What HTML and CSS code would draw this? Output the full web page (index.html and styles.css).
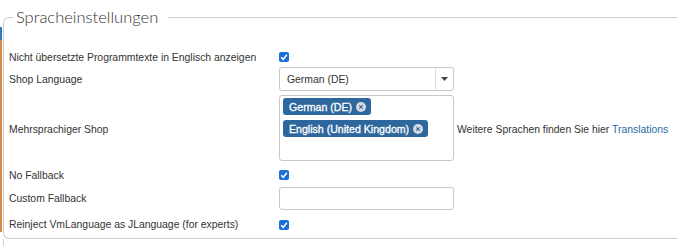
FILE: index.html
```html
<!DOCTYPE html>
<html lang="de">
<head>
<meta charset="utf-8">
<title>Spracheinstellungen</title>
<link rel="stylesheet" href="styles.css">
</head>
<body>
<div class="page">
  <div class="strip">
    <div class="strip-blue"></div>
    <div class="strip-orange"></div>
  </div>
  <div class="main">
    <fieldset class="panel">
      <legend class="panel-title">Spracheinstellungen</legend>
      <div class="form">
        <div class="label">Nicht übersetzte Programmtexte in Englisch anzeigen</div>
        <div class="field"><span class="check"><svg viewBox="0 0 10 10" width="10" height="10"><path d="M2.2 5.2 L4.2 7.2 L7.9 2.8" fill="none" stroke="#fff" stroke-width="1.6"/></svg></span></div>

        <div class="label">Shop Language</div>
        <div class="field">
          <div class="select">
            <span class="select-value">German (DE)</span>
            <span class="select-arrow"><svg viewBox="0 0 7 4" width="7" height="4"><path d="M0 0 H7 L3.5 4 Z" fill="#444"/></svg></span>
          </div>
        </div>

        <div class="label label-multi">Mehrsprachiger Shop</div>
        <div class="field field-multi">
          <div class="multi">
            <span class="tag">German (DE)<span class="tag-x"><svg viewBox="0 0 10 10" width="10" height="10"><circle cx="5" cy="5" r="5" fill="#d6d9dc"/><path d="M3.3 3.3 L6.7 6.7 M6.7 3.3 L3.3 6.7" stroke="#2e679d" stroke-width="1.1"/></svg></span></span>
            <span class="tag">English (United Kingdom)<span class="tag-x"><svg viewBox="0 0 10 10" width="10" height="10"><circle cx="5" cy="5" r="5" fill="#d6d9dc"/><path d="M3.3 3.3 L6.7 6.7 M6.7 3.3 L3.3 6.7" stroke="#2e679d" stroke-width="1.1"/></svg></span></span>
          </div>
          <div class="note">Weitere Sprachen finden Sie hier <a class="link" href="#">Translations</a></div>
        </div>

        <div class="label">No Fallback</div>
        <div class="field"><span class="check"><svg viewBox="0 0 10 10" width="10" height="10"><path d="M2.2 5.2 L4.2 7.2 L7.9 2.8" fill="none" stroke="#fff" stroke-width="1.6"/></svg></span></div>

        <div class="label">Custom Fallback</div>
        <div class="field"><div class="input"></div></div>

        <div class="label">Reinject VmLanguage as JLanguage (for experts)</div>
        <div class="field"><span class="check"><svg viewBox="0 0 10 10" width="10" height="10"><path d="M2.2 5.2 L4.2 7.2 L7.9 2.8" fill="none" stroke="#fff" stroke-width="1.6"/></svg></span></div>
      </div>
    </fieldset>
    <div class="next"></div>
  </div>
</div>
</body>
</html>
```
FILE: styles.css
```css
html, body {
  margin: 0;
  padding: 0;
  background: #fff;
  overflow: hidden;
}
body {
  font-family: "Liberation Sans", Arial, sans-serif;
  font-size: 10.4px;
  color: #333;
}
.page {
  display: flex;
  width: 100%;
  height: 246px;
}
.strip {
  width: 3px;
  display: flex;
  flex-direction: column;
  padding-top: 27px;
}
.strip-blue {
  height: 13px;
  background: #2f7bbf;
  width: 2px;
}
.strip-orange {
  height: 192px;
  background: #d98a4a;
  width: 2px;
}
.main {
  flex: 1;
  min-width: 0;
  display: flex;
  flex-direction: column;
}
.panel {
  margin: 0;
  padding: 0 0 0 5px;
  border: 1px solid #cfcfcf;
  border-right: none;
  border-radius: 6px 0 0 6px;
  min-width: 0;
  box-sizing: border-box;
  height: 239px;
}
.panel-title {
  margin-left: 4px;
  padding: 0 10px 0 3px;
  font-family: "Lato", "Liberation Sans", sans-serif;
  font-size: 16.5px;
  font-weight: 300;
  line-height: 34px;
  color: #333;
}
.form {
  display: grid;
  grid-template-columns: 270px 1fr;
  grid-template-rows: 18px 26px 72px 22px 25px 27px;
  padding-top: 14px;
}
.label {
  display: flex;
  align-items: center;
}
.label-multi {
  padding-top: 3px;
}
.field {
  display: flex;
  align-items: center;
}
.check {
  width: 10px;
  height: 10px;
  border-radius: 2px;
  background: #1b6fd6;
  display: inline-flex;
}
.select {
  width: 175px;
  height: 24px;
  box-sizing: border-box;
  border: 1px solid #c8c8c8;
  border-radius: 3px;
  display: flex;
  align-items: stretch;
}
.select-value {
  flex: 1;
  display: flex;
  align-items: center;
  padding-left: 7px;
  color: #333;
}
.select-arrow {
  width: 17px;
  border-left: 1px solid #dcdcdc;
  display: flex;
  align-items: center;
  justify-content: center;
}
.field-multi {
  gap: 3px;
}
.multi {
  width: 175px;
  height: 66px;
  box-sizing: border-box;
  border: 1px solid #c8c8c8;
  border-radius: 3px;
  padding: 2px 3px;
  display: flex;
  flex-direction: column;
  align-items: flex-start;
  gap: 5px;
}
.tag {
  display: inline-flex;
  align-items: center;
  height: 17px;
  padding: 0 5px 0 6px;
  background: #2e679d;
  color: #fff;
  border-radius: 3px;
  font-size: 10.6px;
  -webkit-text-stroke: 0.3px #fff;
  gap: 4px;
}
.tag-x {
  display: inline-flex;
}
.note {
  padding-top: 2px;
  color: #333;
}
.link {
  color: #2a6aa8;
  text-decoration: none;
}
.input {
  width: 175px;
  height: 23px;
  box-sizing: border-box;
  border: 1px solid #c8c8c8;
  border-radius: 3px;
}
.next {
  flex: 1;
  border-left: 1px solid #cfcfcf;
}
```
